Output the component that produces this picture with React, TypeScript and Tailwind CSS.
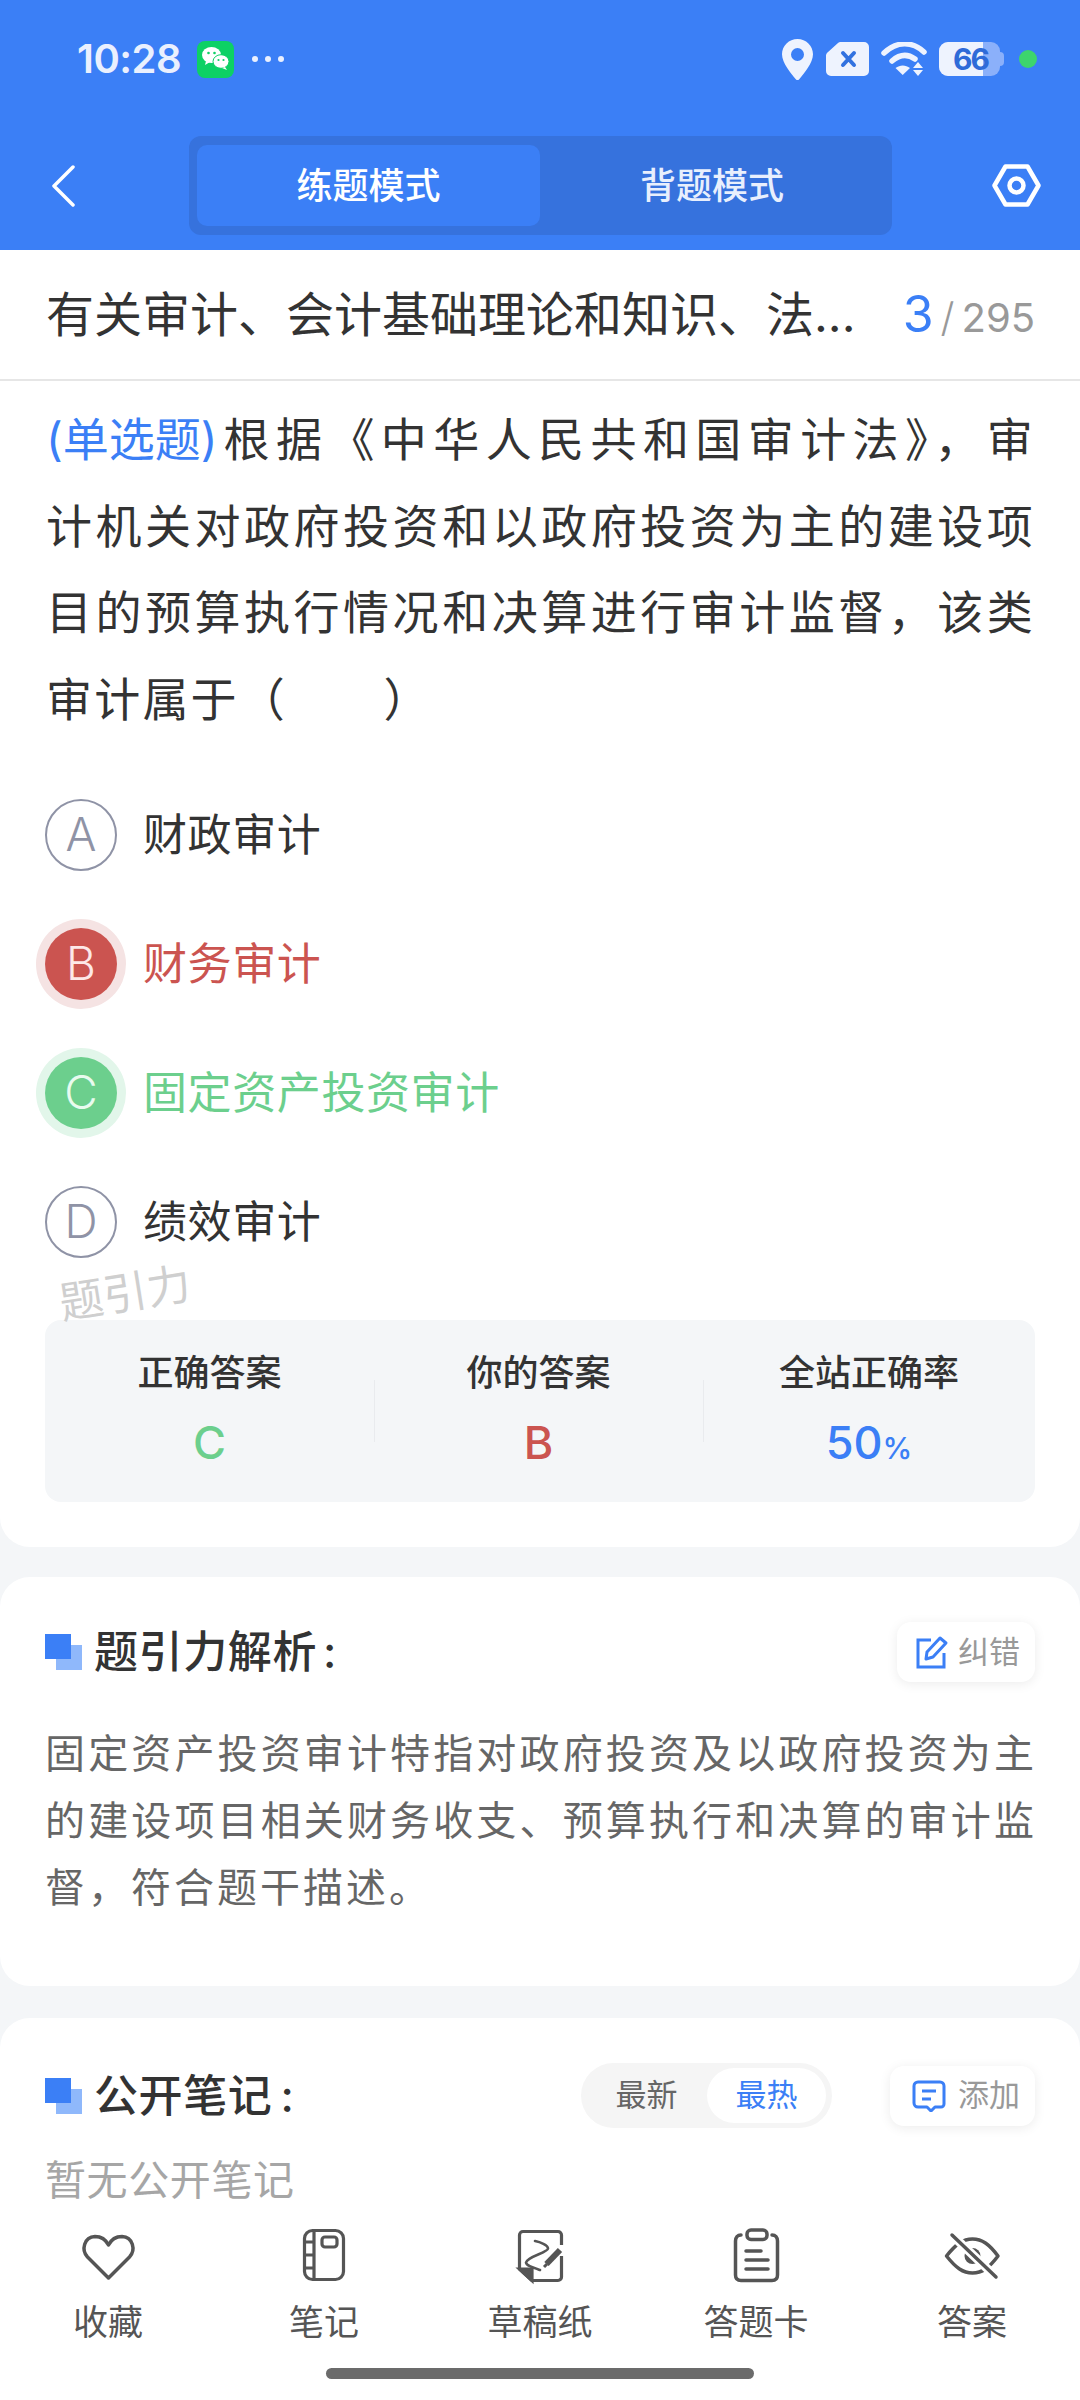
import React from 'react';

const options = [
  { key: 'A', text: '财政审计', state: 'idle' },
  { key: 'B', text: '财务审计', state: 'wrong' },
  { key: 'C', text: '固定资产投资审计', state: 'right' },
  { key: 'D', text: '绩效审计', state: 'idle' },
];

function SectionMark() {
  return (
    <svg width="37" height="36" viewBox="0 0 37 36" className="shrink-0">
      <rect x="11" y="11" width="26" height="25" fill="#8fb8fb" />
      <rect x="0" y="0" width="26" height="25" fill="#3b7ff6" />
    </svg>
  );
}

function StatusBar() {
  return (
    <div className="flex items-center h-[118px] pl-[77px] pr-[43px]">
      <span className="text-[40px] font-semibold text-[#eaf0fe] w-[103px] leading-none tracking-[-0.500px]">10:28</span>
      <svg width="37" height="37" viewBox="0 0 37 37" className="ml-[17px]">
        <rect width="37" height="37" rx="8" fill="#0dd165" />
        <ellipse cx="14.5" cy="14" rx="9.5" ry="8" fill="#fff" />
        <path d="M9 20l-1 4 5-3z" fill="#fff" />
        <ellipse cx="24" cy="20.5" rx="8" ry="6.8" fill="#fff" stroke="#0dd165" strokeWidth="1" />
        <path d="M28 26l2 3-5-2z" fill="#fff" />
        <circle cx="11.5" cy="12" r="1.3" fill="#0dd165" />
        <circle cx="17.5" cy="12" r="1.3" fill="#0dd165" />
        <circle cx="21.5" cy="19" r="1.1" fill="#0dd165" />
        <circle cx="26.5" cy="19" r="1.1" fill="#0dd165" />
      </svg>
      <div className="flex items-center gap-[7px] ml-[18px]">
        <span className="w-[6px] h-[6px] rounded-full bg-[#eaf0fe]" />
        <span className="w-[6px] h-[6px] rounded-full bg-[#eaf0fe]" />
        <span className="w-[6px] h-[6px] rounded-full bg-[#eaf0fe]" />
      </div>
      <div className="flex-1" />
      <svg width="31" height="41" viewBox="0 0 31 41">
        <path fillRule="evenodd" d="M15.5 0C7 0 0 6.8 0 15.3 0 24 9 34.5 13.6 40a2.5 2.5 0 0 0 3.8 0C22 34.5 31 24 31 15.3 31 6.8 24 0 15.5 0zm0 9a6.5 6.5 0 1 1 0 13 6.5 6.5 0 0 1 0-13z" fill="#eef3fe" />
      </svg>
      <svg width="43" height="34" viewBox="0 0 43 34" className="ml-[13px]">
        <path d="M12 1a4 4 0 0 1 2.8-1H38a5 5 0 0 1 5 5v24a5 5 0 0 1-5 5H5a5 5 0 0 1-5-5V13.5a4 4 0 0 1 1.2-2.8z" fill="#eef3fe" />
        <path d="M17 11l11 12M28 11L17 23" stroke="#3272e0" strokeWidth="4" strokeLinecap="round" />
      </svg>
      <svg width="47" height="34" viewBox="0 0 47 34" className="ml-[12px]">
        <path d="M3 11C16-1 31-1 43 10" fill="none" stroke="#eef3fe" strokeWidth="5.5" strokeLinecap="round" />
        <path d="M11 19C19 12 27 12 34 17" fill="none" stroke="#eef3fe" strokeWidth="5.5" strokeLinecap="round" />
        <path d="M14.5 26c4.500-3.500 10-3.500 14.500 0l-7.300 7z" fill="#eef3fe" />
        <path d="M37 20l5 6h-10zM37 34l-5-6h10z" fill="#eef3fe" />
      </svg>
      <div className="relative w-[65px] h-[34px] ml-[11px]">
        <div className="absolute right-0 top-[10px] w-[8px] h-[14px] rounded-r-[4px] bg-[#8bb0fa]" />
        <div className="absolute left-0 top-0 w-[61px] h-[34px] rounded-[9px] bg-[#8bb0fa]" />
        <div className="absolute left-0 top-0 w-[44px] h-[34px] rounded-l-[9px] bg-[#eef3fe]" />
        <span className="absolute left-[14px] top-0 h-[34px] leading-[34px] text-[30px] font-bold tracking-[-2px] text-[#2f6bd8]">66</span>
      </div>
      <span className="w-[18px] h-[18px] rounded-full bg-[#3dd56d] ml-[15px]" />
    </div>
  );
}

function Header() {
  return (
    <div className="h-[250px] bg-[#3b7ff6]">
      <StatusBar />
      <div className="flex items-center h-[99px] mt-[18px]">
        <div className="w-[189px] pl-[51px]">
          <svg width="24" height="42" viewBox="0 0 24 42">
            <path d="M22 2L3 21l19 19" fill="none" stroke="#fff" strokeWidth="3.5" strokeLinecap="round" strokeLinejoin="round" />
          </svg>
        </div>
        <div className="w-[703px] h-[99px] rounded-[12px] bg-[#3672dd] flex items-center pl-[8px] pr-[8px]">
          <div className="w-[343px] h-[81px] rounded-[10px] bg-[#3b7ff6] flex items-center justify-center text-[36px] font-medium text-white">练题模式</div>
          <div className="flex-1 flex items-center justify-center text-[36px] font-medium text-[#e8effd]">背题模式</div>
        </div>
        <div className="flex-1 pl-[100px]">
          <svg width="49" height="43" viewBox="0 0 49 43" className="block">
            <path d="M13.500 2.500h22L46.500 21.500l-11 19h-22L2.500 21.500z" fill="none" stroke="#fff" strokeWidth="4.500" strokeLinejoin="round" />
            <circle cx="24.500" cy="21.500" r="7" fill="none" stroke="#fff" strokeWidth="4.500" />
          </svg>
        </div>
      </div>
    </div>
  );
}

function TitleRow() {
  return (
    <div className="h-[131px] bg-white border-b-2 border-[#e6e6e6] flex items-center justify-between pl-[46px] pr-[45px]">
      <span className="text-[48px] text-[#333] whitespace-nowrap">有关审计、会计基础理论和知识、法...</span>
      <span className="flex items-baseline whitespace-nowrap text-[#999]">
        <span className="text-[50px] text-[#3b7ff6]">3</span>
        <span className="text-[40px] mx-[7px] font-light">/</span>
        <span className="text-[40px]">295</span>
      </span>
    </div>
  );
}

function Question() {
  return (
    <div className="ml-[1px] pt-[15px] text-[46px] leading-[86.500px] tracking-[2.200px] text-[#333]">
      <div className="flex whitespace-nowrap">
        <span className="shrink-0 text-[#3b7ff6] tracking-normal mr-[6px]">(单选题)</span>
        <span className="flex-1 [text-align-last:justify]">根据《中华人民共和国审计法》，审</span>
      </div>
      <div className="[text-align-last:justify]">计机关对政府投资和以政府投资为主的建设项</div>
      <div className="[text-align-last:justify]">目的预算执行情况和决算进行审计监督，该类</div>
      <div>审计属于（　　）</div>
    </div>
  );
}

function OptionRow({ item }: { item: (typeof options)[number] }) {
  const circle =
    item.state === 'wrong'
      ? 'bg-[#cb5450] text-[#fde8e8] shadow-[0_0_0_9px_#f5e3e3]'
      : item.state === 'right'
      ? 'bg-[#6ccf8d] text-[#e8fbef] shadow-[0_0_0_9px_#e2f6ea]'
      : 'border-2 border-[#8f93a6] text-[#8f93a6]';
  const label =
    item.state === 'wrong' ? 'text-[#cb5450]' : item.state === 'right' ? 'text-[#6ccf8d]' : 'text-[#333]';
  return (
    <div className="h-[129px] flex items-center">
      <div className={`w-[72px] h-[72px] rounded-full flex items-center justify-center text-[46px] font-light ${circle}`}>
        {item.key}
      </div>
      <span className={`ml-[26px] text-[44px] tracking-[0.600px] ${label}`}>{item.text}</span>
    </div>
  );
}

function StatBox() {
  return (
    <div className="mt-[34px] h-[182px] rounded-[16px] bg-[#f4f6f8] grid grid-cols-[329px_329px_1fr] relative">
      {[
        { label: '正确答案', value: <span className="text-[#6ccf8d]">C</span> },
        { label: '你的答案', value: <span className="text-[#cb5450]">B</span> },
        {
          label: '全站正确率',
          value: (
            <span className="text-[#3b7ff6]">
              50<span className="text-[30px]">%</span>
            </span>
          ),
        },
      ].map((s, i) => (
        <div key={s.label} className="flex flex-col items-center pt-[30px] relative">
          {i > 0 && <span className="absolute left-0 top-[60px] w-[1px] h-[62px] bg-[#e9ebee]" />}
          <span className="text-[36px] leading-[46px] font-medium text-[#333]">{s.label}</span>
          <span className="text-[45px] leading-[60px] mt-[17px] font-medium">{s.value}</span>
        </div>
      ))}
    </div>
  );
}

function ChipButton({ icon, text, wide }: { icon: React.ReactNode; text: string; wide?: boolean }) {
  return (
    <div
      className={`h-[60px] rounded-[14px] bg-white shadow-[0_2px_12px_rgba(0,0,0,0.08)] flex items-center justify-end pr-[15px] ${
        wide ? 'w-[145px] gap-[12px]' : 'w-[138px] gap-[9px]'
      }`}
    >
      {icon}
      <span className="text-[31px] text-[#999] whitespace-nowrap">{text}</span>
    </div>
  );
}

function BottomBar() {
  const stroke = '#555';
  const items = [
    {
      label: '收藏',
      icon: (
        <path d="M30.500 52L9.500 31C3 24 6 11 17 10.500c6 0 11 3.500 13.500 8.500C33 14 38 10.500 44 10.500 55 11 58 24 51.500 31z" fill="none" stroke={stroke} strokeWidth="3.500" strokeLinejoin="round" />
      ),
    },
    {
      label: '笔记',
      icon: (
        <g fill="none" stroke={stroke} strokeWidth="3.200">
          <rect x="10.500" y="4.500" width="39" height="49" rx="8" />
          <path d="M20 4.500v49M10.500 16H20M10.500 29H20M10.500 42H20" />
          <rect x="28" y="11" width="15" height="10" rx="3" />
        </g>
      ),
    },
    {
      label: '草稿纸',
      icon: (
        <g fill="none" stroke={stroke} strokeWidth="3.200">
          <path d="M51.500 19V9A3.500 3.500 0 0 0 48 5.500H13A3.500 3.500 0 0 0 9.500 9v34L22 54.500h26a3.500 3.500 0 0 0 3.500-3.500V30" strokeLinejoin="round" />
          <path d="M9.500 43H22v11.500z" fill={stroke} />
          <path d="M25 15c5 1 13 4 13 7.500 0 4-21 8-22 14 0 3 8 5.500 14 7.500" strokeWidth="2.600" strokeLinecap="round" />
          <path d="M36.500 38L50 24" strokeWidth="6" />
          <path d="M34 41l3-3" strokeWidth="3" />
        </g>
      ),
    },
    {
      label: '答题卡',
      icon: (
        <g fill="none" stroke={stroke} strokeWidth="3.500" strokeLinecap="round">
          <path d="M15 9c-3.500 0-5.500 2.500-5.500 6v34c0 3.500 2 5.500 5.500 5.500h31c3.500 0 5.500-2 5.500-5.500V15c0-3.500-2-6-5.500-6" />
          <rect x="21" y="4" width="20" height="9.500" rx="4" />
          <path d="M20 25h15M20 34h22M20 43h22" />
        </g>
      ),
    },
    {
      label: '答案',
      icon: (
        <g fill="none" stroke={stroke} strokeWidth="3.500" strokeLinecap="round">
          <path d="M4.500 30C14 18 21 13 30.500 13S47 18 56 30C47 42 40 47 30.500 47S14 42 4.500 30z" strokeLinejoin="round" />
          <circle cx="30.500" cy="30" r="8" fill={stroke} stroke="none" />
          <path d="M10 9l44 42" stroke="#fff" strokeWidth="9" strokeLinecap="butt" />
          <path d="M10 9l44 42" />
        </g>
      ),
    },
  ];
  return (
    <div className="absolute left-0 right-0 bottom-0 h-[195px] bg-white">
      <div className="grid grid-cols-5 pt-[21px]">
        {items.map((it) => (
          <div key={it.label} className="flex flex-col items-center">
            <svg width="60" height="60" viewBox="0 0 60 60">
              {it.icon}
            </svg>
            <span className="text-[35px] leading-[46px] mt-[13px] text-[#555]">{it.label}</span>
          </div>
        ))}
      </div>
      <div className="absolute left-[326px] top-[163px] w-[428px] h-[11px] rounded-full bg-[#6b6b6b]" />
    </div>
  );
}

export default function App() {
  return (
    <div className="relative w-[1080px] h-[2400px] overflow-hidden bg-[#f4f6f8] font-['Inter','Noto_Sans_CJK_SC',sans-serif]">
      <Header />
      <TitleRow />

      <div className="bg-white rounded-b-[30px] px-[45px] pb-[45px]">
        <Question />
        <div className="mt-[28px]">
          {options.map((o) => (
            <OptionRow key={o.key} item={o} />
          ))}
        </div>
        <StatBox />
      </div>

      <div className="mt-[30px] bg-white rounded-[30px] px-[45px] pt-[45px] pb-[65px]">
        <div className="flex items-center justify-between h-[60px]">
          <div className="flex items-center gap-[12px]">
            <SectionMark />
            <span className="text-[44px] font-medium tracking-[0.600px] text-[#333]">
              题引力解析<span className="ml-[6px]">:</span>
            </span>
          </div>
          <ChipButton
            text="纠错"
            icon={
              <svg width="33" height="34" viewBox="0 0 33 34" fill="none" stroke="#3b7ff6" strokeWidth="3">
                <path d="M15 5H2v27h26V18" />
                <path d="M10 24l1-7L24 3l6 5-13 14z" strokeLinejoin="round" />
              </svg>
            }
          />
        </div>
        <p className="mt-[38px] -mr-[2px] text-[40px] leading-[67px] tracking-[3px] text-[#666] text-justify">
          固定资产投资审计特指对政府投资及以政府投资为主的建设项目相关财务收支、预算执行和决算的审计监督，符合题干描述。
        </p>
      </div>

      <div className="mt-[32px] bg-white rounded-t-[30px] h-[400px] px-[45px] pt-[45px]">
        <div className="flex items-center h-[65px]">
          <SectionMark />
          <span className="ml-[12px] text-[44px] font-medium tracking-[0.600px] text-[#333]">
            公开笔记<span className="ml-[8px]">:</span>
          </span>
          <div className="flex-1" />
          <div className="w-[251px] h-[65px] rounded-full bg-[#f5f5f5] flex items-center pl-[5px] mr-[58px]">
            <span className="w-[121px] text-center text-[31px] text-[#666]">最新</span>
            <span className="w-[119px] h-[55px] rounded-full bg-white flex items-center justify-center text-[31px] text-[#3b7ff6]">最热</span>
          </div>
          <ChipButton
            wide
            text="添加"
            icon={
              <svg width="34" height="32" viewBox="0 0 34 32" fill="none" stroke="#3b7ff6" strokeWidth="3">
                <path d="M6 2h22a4 4 0 0 1 4 4v18a3 3 0 0 1-3 3h-6l-4 4-4-4H6a4 4 0 0 1-4-4V6a4 4 0 0 1 4-4z" strokeLinejoin="round" />
                <path d="M10 11h14M10 19h9" />
              </svg>
            }
          />
        </div>
        <p className="mt-[22px] text-[41px] leading-[60px] tracking-[0.600px] text-[#a6a6a6]">暂无公开笔记</p>
      </div>

      <span className="absolute left-[59px] top-[1265px] text-[44px] leading-[56px] text-[#cfcfcf] -rotate-[9deg]">题引力</span>

      <BottomBar />
    </div>
  );
}
